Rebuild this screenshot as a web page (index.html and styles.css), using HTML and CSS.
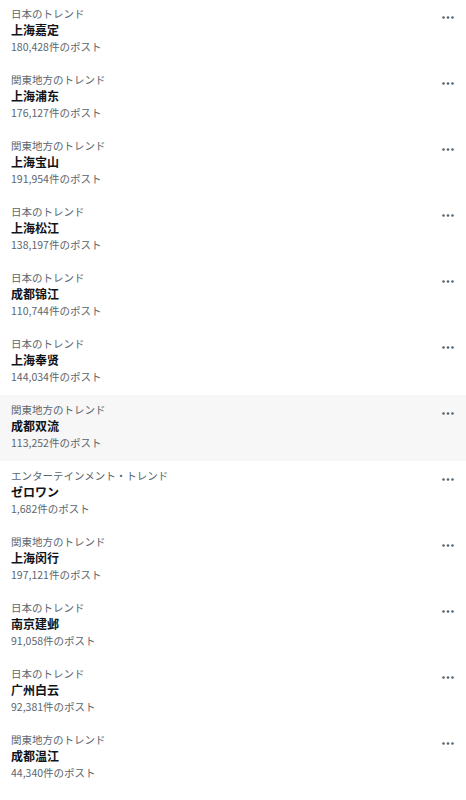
FILE: index.html
```html
<!DOCTYPE html>
<html>
<head>
    <title>トレンド</title>
    <link rel="stylesheet" href="styles.css">
</head>
<body>
    <div class="trends">
        <div class="trend"><div class="info"><span class="label">日本のトレンド</span><span class="name">上海嘉定</span><span class="count">180,428件のポスト</span></div><span class="more"><svg width="12" height="3" viewBox="0 0 12 3"><circle cx="1.5" cy="1.5" r="1.3"/><circle cx="6" cy="1.5" r="1.3"/><circle cx="10.5" cy="1.5" r="1.3"/></svg></span></div>
        <div class="trend"><div class="info"><span class="label">関東地方のトレンド</span><span class="name">上海浦东</span><span class="count">176,127件のポスト</span></div><span class="more"><svg width="12" height="3" viewBox="0 0 12 3"><circle cx="1.5" cy="1.5" r="1.3"/><circle cx="6" cy="1.5" r="1.3"/><circle cx="10.5" cy="1.5" r="1.3"/></svg></span></div>
        <div class="trend"><div class="info"><span class="label">関東地方のトレンド</span><span class="name">上海宝山</span><span class="count">191,954件のポスト</span></div><span class="more"><svg width="12" height="3" viewBox="0 0 12 3"><circle cx="1.5" cy="1.5" r="1.3"/><circle cx="6" cy="1.5" r="1.3"/><circle cx="10.5" cy="1.5" r="1.3"/></svg></span></div>
        <div class="trend"><div class="info"><span class="label">日本のトレンド</span><span class="name">上海松江</span><span class="count">138,197件のポスト</span></div><span class="more"><svg width="12" height="3" viewBox="0 0 12 3"><circle cx="1.5" cy="1.5" r="1.3"/><circle cx="6" cy="1.5" r="1.3"/><circle cx="10.5" cy="1.5" r="1.3"/></svg></span></div>
        <div class="trend"><div class="info"><span class="label">日本のトレンド</span><span class="name">成都锦江</span><span class="count">110,744件のポスト</span></div><span class="more"><svg width="12" height="3" viewBox="0 0 12 3"><circle cx="1.5" cy="1.5" r="1.3"/><circle cx="6" cy="1.5" r="1.3"/><circle cx="10.5" cy="1.5" r="1.3"/></svg></span></div>
        <div class="trend"><div class="info"><span class="label">日本のトレンド</span><span class="name">上海奉贤</span><span class="count">144,034件のポスト</span></div><span class="more"><svg width="12" height="3" viewBox="0 0 12 3"><circle cx="1.5" cy="1.5" r="1.3"/><circle cx="6" cy="1.5" r="1.3"/><circle cx="10.5" cy="1.5" r="1.3"/></svg></span></div>
        <div class="trend hover"><div class="info"><span class="label">関東地方のトレンド</span><span class="name">成都双流</span><span class="count">113,252件のポスト</span></div><span class="more"><svg width="12" height="3" viewBox="0 0 12 3"><circle cx="1.5" cy="1.5" r="1.3"/><circle cx="6" cy="1.5" r="1.3"/><circle cx="10.5" cy="1.5" r="1.3"/></svg></span></div>
        <div class="trend"><div class="info"><span class="label">エンターテインメント・トレンド</span><span class="name">ゼロワン</span><span class="count">1,682件のポスト</span></div><span class="more"><svg width="12" height="3" viewBox="0 0 12 3"><circle cx="1.5" cy="1.5" r="1.3"/><circle cx="6" cy="1.5" r="1.3"/><circle cx="10.5" cy="1.5" r="1.3"/></svg></span></div>
        <div class="trend"><div class="info"><span class="label">関東地方のトレンド</span><span class="name">上海闵行</span><span class="count">197,121件のポスト</span></div><span class="more"><svg width="12" height="3" viewBox="0 0 12 3"><circle cx="1.5" cy="1.5" r="1.3"/><circle cx="6" cy="1.5" r="1.3"/><circle cx="10.5" cy="1.5" r="1.3"/></svg></span></div>
        <div class="trend"><div class="info"><span class="label">日本のトレンド</span><span class="name">南京建邺</span><span class="count">91,058件のポスト</span></div><span class="more"><svg width="12" height="3" viewBox="0 0 12 3"><circle cx="1.5" cy="1.5" r="1.3"/><circle cx="6" cy="1.5" r="1.3"/><circle cx="10.5" cy="1.5" r="1.3"/></svg></span></div>
        <div class="trend"><div class="info"><span class="label">日本のトレンド</span><span class="name">广州白云</span><span class="count">92,381件のポスト</span></div><span class="more"><svg width="12" height="3" viewBox="0 0 12 3"><circle cx="1.5" cy="1.5" r="1.3"/><circle cx="6" cy="1.5" r="1.3"/><circle cx="10.5" cy="1.5" r="1.3"/></svg></span></div>
        <div class="trend"><div class="info"><span class="label">関東地方のトレンド</span><span class="name">成都温江</span><span class="count">44,340件のポスト</span></div><span class="more"><svg width="12" height="3" viewBox="0 0 12 3"><circle cx="1.5" cy="1.5" r="1.3"/><circle cx="6" cy="1.5" r="1.3"/><circle cx="10.5" cy="1.5" r="1.3"/></svg></span></div>
    </div>
</body>
</html>
```

FILE: styles.css
```css
body {
    margin: 0;
    padding: 0;
    background-color: #ffffff;
    font-family: "Noto Sans CJK JP", "Noto Sans", sans-serif;
}

.trends {
    margin-top: -1px;
}

.trend {
    display: flex;
    justify-content: space-between;
    align-items: flex-start;
    height: 66px;
    box-sizing: border-box;
    padding: 7px 11px 0 11px;
}

.trend.hover {
    background-color: #f7f7f7;
}

.info {
    display: flex;
    flex-direction: column;
}

.label {
    font-size: 10.5px;
    line-height: 16px;
    color: #5b6670;
}

.name {
    font-size: 12px;
    line-height: 16px;
    font-weight: bold;
    color: #0f1419;
}

.count {
    font-size: 10.5px;
    line-height: 17px;
    color: #5b6670;
}

.more {
    display: flex;
    padding-top: 10px;
    padding-right: 1px;
    fill: #536471;
}
```
